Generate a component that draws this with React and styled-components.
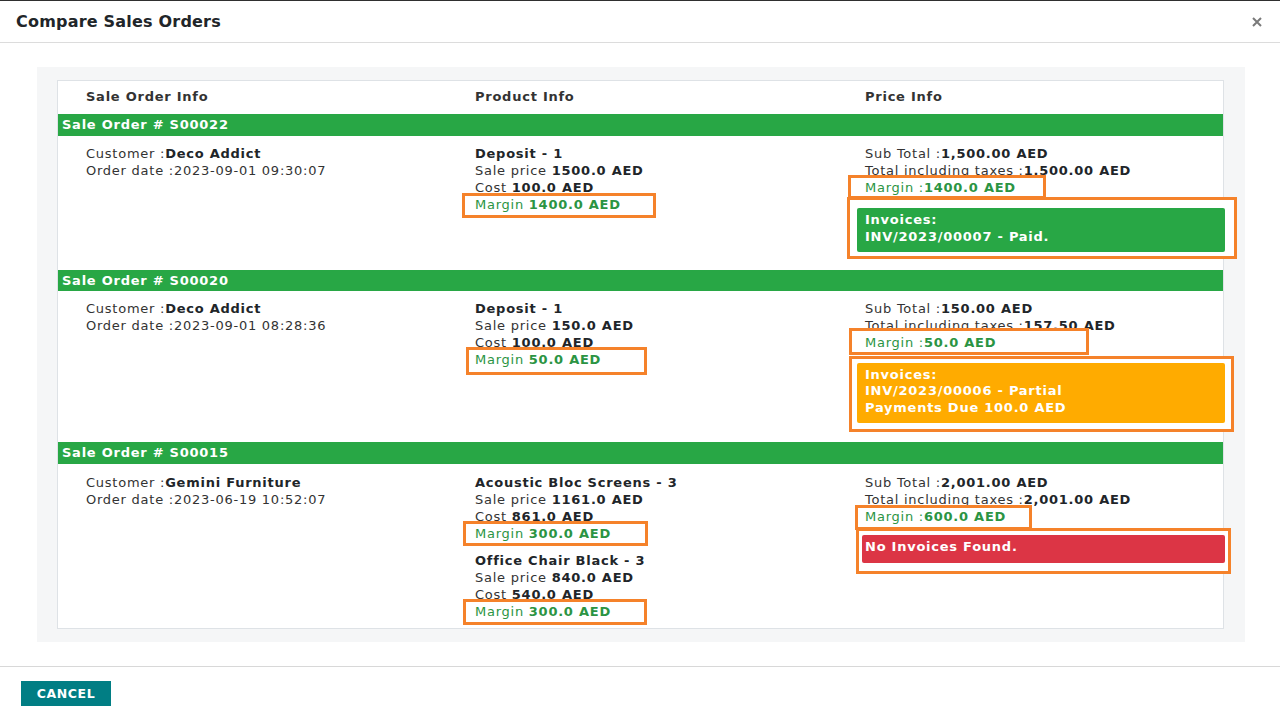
import React from "react";
import styled, { createGlobalStyle } from "styled-components";

const GlobalStyle = createGlobalStyle`
  html, body { margin: 0; padding: 0; background: #fff; }
  body {
    font-family: "DejaVu Sans", "Liberation Sans", sans-serif;
    font-size: 13px;
    color: #333;
  }
`;

const Modal = styled.div`
  width: 1280px;
  height: 720px;
  box-sizing: border-box;
  border-top: 1px solid #2f2f2f;
  display: flex;
  flex-direction: column;
  background: #fff;
`;

const Header = styled.div`
  height: 41px;
  display: flex;
  align-items: center;
  justify-content: space-between;
  padding: 0 16px;
  border-bottom: 1px solid #dcdcdc;
`;

const Title = styled.h4`
  margin: 0;
  font-size: 16px;
  font-weight: bold;
  letter-spacing: 0.2px;
  color: #212529;
`;

const Close = styled.button`
  border: 0;
  background: none;
  padding: 0;
  width: 14px;
  height: 14px;
  display: flex;
  align-items: center;
  justify-content: center;
  cursor: pointer;
`;

const Body = styled.div`
  padding: 24px 35px 24px 37px;
`;

const Panel = styled.div`
  background: #f5f6f7;
  padding: 13px 21px 13px 20px;
`;

const Table = styled.div`
  background: #fff;
  border: 1px solid #dee2e6;
  letter-spacing: 0.75px;
  line-height: 17px;
`;

const Grid = styled.div`
  display: grid;
  grid-template-columns: 389px 390px minmax(0, 1fr);
`;

const HeadCell = styled.div`
  padding: 7px 0 9px 28px;
  font-weight: bold;
  color: #333;
`;

const OrderBar = styled.div`
  background: #28a745;
  color: #fff;
  font-weight: bold;
  height: ${(p) => p.$h || 21.5}px;
  line-height: ${(p) => p.$h || 21.5}px;
  padding-left: 4px;
`;

const Row = styled(Grid)`
  padding: ${(p) => p.$pt}px 0 ${(p) => p.$pb}px;
`;

const Cell = styled.div`
  display: flex;
  flex-direction: column;
  align-items: flex-start;
  padding-left: 28px;
`;

const Line = styled.div`
  white-space: nowrap;
  color: #333;
  b { color: #212529; }
`;

const ProductName = styled(Line)`
  font-weight: bold;
  color: #212529;
  margin-top: ${(p) => (p.$gap ? 10 : 0)}px;
`;

const MarginLine = styled(Line)`
  color: #2b9443;
  b { color: #2b9443; }
`;

const Highlight = styled.div`
  position: relative;
  box-sizing: border-box;
  width: ${(p) => p.$w}px;
  margin: ${(p) => -p.$t}px 0 ${(p) => -p.$b}px ${(p) => p.$x}px;
  padding: ${(p) => Math.max(p.$t - 3, 0)}px 0 ${(p) => Math.max(p.$b - 3, 0)}px
    ${(p) => -p.$x - 3}px;
  border: 3px solid #f5822a;
  box-shadow: inset 0 0 0 2px #fff;
`;

const InvoiceFrame = styled.div`
  position: relative;
  box-sizing: border-box;
  width: ${(p) => p.$w}px;
  margin: ${(p) => p.$mt}px 0 0 ${(p) => p.$x}px;
  padding: ${(p) => p.$pt}px 0 ${(p) => p.$pb}px ${(p) => p.$pl}px;
  border: 3px solid #f5822a;
  background: #fff;
`;

const tones = { paid: "#28a745", partial: "#ffab00", none: "#dc3545" };

const Alert = styled.div`
  box-sizing: border-box;
  width: ${(p) => p.$w}px;
  background: ${(p) => tones[p.$tone]};
  color: #fff;
  font-weight: bold;
  line-height: 16.5px;
  padding: 4px 8px 7px ${(p) => p.$pl}px;
  border-radius: 2px;
`;

const Footer = styled.div`
  margin-top: auto;
  border-top: 1px solid #d8d8d8;
  height: 54px;
  padding: 14px 21px 0;
  box-sizing: border-box;
`;

const CancelButton = styled.button`
  width: 90px;
  height: 25px;
  border: 0;
  background: #017e84;
  color: #fff;
  font-family: "DejaVu Sans", sans-serif;
  font-size: 12.5px;
  font-weight: bold;
  letter-spacing: 0.6px;
  padding: 0;
`;

const CloseIcon = () => (
  <svg width="10" height="10" viewBox="0 0 10 10">
    <path d="M1 1 L9 9 M9 1 L1 9" stroke="#7a7a7a" strokeWidth="2" />
  </svg>
);

const Margin = ({ value, colon }) => (
  <MarginLine>
    Margin {colon ? ":" : ""}
    <b>{value}</b>
  </MarginLine>
);

export default function App() {
  return (
    <>
      <GlobalStyle />
      <Modal>
        <Header>
          <Title>Compare Sales Orders</Title>
          <Close aria-label="close">
            <CloseIcon />
          </Close>
        </Header>
        <Body>
          <Panel>
            <Table>
              <Grid>
                <HeadCell>Sale Order Info</HeadCell>
                <HeadCell>Product Info</HeadCell>
                <HeadCell>Price Info</HeadCell>
              </Grid>

              <OrderBar>Sale Order # S00022</OrderBar>
              <Row $pt={9} $pb={10.5}>
                <Cell>
                  <Line>
                    Customer :<b>Deco Addict</b>
                  </Line>
                  <Line>Order date :2023-09-01 09:30:07</Line>
                </Cell>
                <Cell>
                  <ProductName>Deposit - 1</ProductName>
                  <Line>
                    Sale price <b>1500.0 AED</b>
                  </Line>
                  <Line>
                    Cost <b>100.0 AED</b>
                  </Line>
                  <Highlight $x={-13} $w={194} $t={3} $b={5.5}>
                    <Margin value="1400.0 AED" />
                  </Highlight>
                </Cell>
                <Cell>
                  <Line>
                    Sub Total :<b>1,500.00 AED</b>
                  </Line>
                  <Line>
                    Total including taxes :<b>1,500.00 AED</b>
                  </Line>
                  <Highlight $x={-17} $w={198} $t={3.5} $b={3}>
                    <Margin value="1400.0 AED" colon />
                  </Highlight>
                  <InvoiceFrame $x={-18} $w={390} $mt={1.5} $pt={8} $pb={4} $pl={7}>
                    <Alert $tone="paid" $w={368} $pl={8}>
                      Invoices:
                      <br />
                      INV/2023/00007 - Paid.
                    </Alert>
                  </InvoiceFrame>
                </Cell>
              </Row>

              <OrderBar>Sale Order # S00020</OrderBar>
              <Row $pt={9} $pb={10}>
                <Cell>
                  <Line>
                    Customer :<b>Deco Addict</b>
                  </Line>
                  <Line>Order date :2023-09-01 08:28:36</Line>
                </Cell>
                <Cell>
                  <ProductName>Deposit - 1</ProductName>
                  <Line>
                    Sale price <b>150.0 AED</b>
                  </Line>
                  <Line>
                    Cost <b>100.0 AED</b>
                  </Line>
                  <Highlight $x={-9} $w={181} $t={4.5} $b={6.5}>
                    <Margin value="50.0 AED" />
                  </Highlight>
                </Cell>
                <Cell>
                  <Line>
                    Sub Total :<b>150.00 AED</b>
                  </Line>
                  <Line>
                    Total including taxes :<b>157.50 AED</b>
                  </Line>
                  <Highlight $x={-16} $w={240} $t={6.5} $b={3.5}>
                    <Margin value="50.0 AED" colon />
                  </Highlight>
                  <InvoiceFrame $x={-16} $w={385} $mt={4.5} $pt={4} $pb={6} $pl={5}>
                    <Alert $tone="partial" $w={368} $pl={8}>
                      Invoices:
                      <br />
                      INV/2023/00006 - Partial
                      <br />
                      Payments Due 100.0 AED
                    </Alert>
                  </InvoiceFrame>
                </Cell>
              </Row>

              <OrderBar $h={22}>Sale Order # S00015</OrderBar>
              <Row $pt={9.5} $pb={8}>
                <Cell>
                  <Line>
                    Customer :<b>Gemini Furniture</b>
                  </Line>
                  <Line>Order date :2023-06-19 10:52:07</Line>
                </Cell>
                <Cell>
                  <ProductName>Acoustic Bloc Screens - 3</ProductName>
                  <Line>
                    Sale price <b>1161.0 AED</b>
                  </Line>
                  <Line>
                    Cost <b>861.0 AED</b>
                  </Line>
                  <Highlight $x={-12} $w={185} $t={3.5} $b={4.5}>
                    <Margin value="300.0 AED" />
                  </Highlight>
                  <ProductName $gap>Office Chair Black - 3</ProductName>
                  <Line>
                    Sale price <b>840.0 AED</b>
                  </Line>
                  <Line>
                    Cost <b>540.0 AED</b>
                  </Line>
                  <Highlight $x={-12} $w={184} $t={3.5} $b={5.5}>
                    <Margin value="300.0 AED" />
                  </Highlight>
                </Cell>
                <Cell>
                  <Line>
                    Sub Total :<b>2,001.00 AED</b>
                  </Line>
                  <Line>
                    Total including taxes :<b>2,001.00 AED</b>
                  </Line>
                  <Highlight $x={-10} $w={177} $t={3} $b={5.5}>
                    <Margin value="600.0 AED" colon />
                  </Highlight>
                  <InvoiceFrame $x={-9} $w={375} $mt={3.5} $pt={4} $pb={8} $pl={3}>
                    <Alert $tone="none" $w={363} $pl={3}>
                      No Invoices Found.
                    </Alert>
                  </InvoiceFrame>
                </Cell>
              </Row>
            </Table>
          </Panel>
        </Body>
        <Footer>
          <CancelButton>CANCEL</CancelButton>
        </Footer>
      </Modal>
    </>
  );
}
